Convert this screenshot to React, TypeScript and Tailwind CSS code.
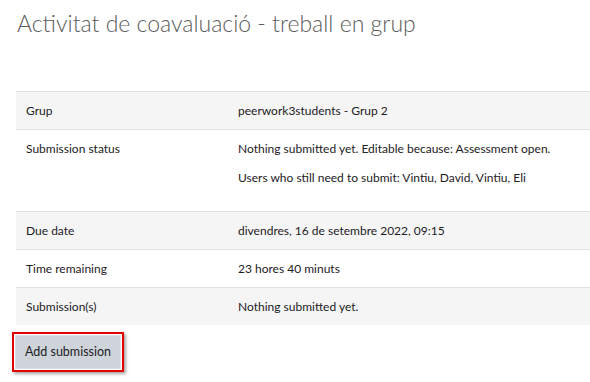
import React from "react";

const rows: { label: string; values: string[]; striped: boolean }[] = [
  { label: "Grup", values: ["peerwork3students - Grup 2"], striped: true },
  {
    label: "Submission status",
    values: [
      "Nothing submitted yet. Editable because: Assessment open.",
      "Users who still need to submit: Vintiu, David, Vintiu, Eli",
    ],
    striped: false,
  },
  { label: "Due date", values: ["divendres, 16 de setembre 2022, 09:15"], striped: true },
  { label: "Time remaining", values: ["23 hores 40 minuts"], striped: false },
  { label: "Submission(s)", values: ["Nothing submitted yet."], striped: true },
];

const App: React.FC = () => {
  return (
    <div className="w-[590px] h-[382px] bg-white overflow-hidden font-['Lato',sans-serif] text-[#1d2125]">
      <h2 className="pl-[17px] pt-[7px] text-[23px] leading-[32px] font-light text-[#5b5b5b] whitespace-nowrap">
        Activitat de coavaluació - treball en grup
      </h2>

      <table className="ml-[16px] mt-[52px] w-[574px] text-[12px] border-collapse table-fixed">
        <tbody>
          {rows.map((row) => (
            <tr
              key={row.label}
              className={`border-t border-[#dee2e6] align-top ${row.striped ? "bg-[#f5f5f5]" : "bg-white"}`}
            >
              <td className="w-[222px] pl-[10px] py-[9px] leading-[19px]">{row.label}</td>
              <td className="py-[9px] leading-[19px] whitespace-nowrap">
                {row.values.map((v, i) => (
                  <p
                    key={i}
                    className={row.values.length > 1 ? (i === row.values.length - 1 ? "mb-[15px]" : "mb-[10px]") : ""}
                  >
                    {v}
                  </p>
                ))}
              </td>
            </tr>
          ))}
        </tbody>
      </table>

      <div className="ml-[12px] mt-[7px] w-[112px] h-[40px] border-2 border-[#e60000] p-[1px] shadow-[2px_2px_3px_rgba(0,0,0,0.35)] flex">
        <button className="flex-1 flex items-center justify-center bg-[#ced4da] border border-[#dcdfe3] text-[12.5px] leading-none text-[#1d2125]">
          Add submission
        </button>
      </div>
    </div>
  );
};

export default App;
